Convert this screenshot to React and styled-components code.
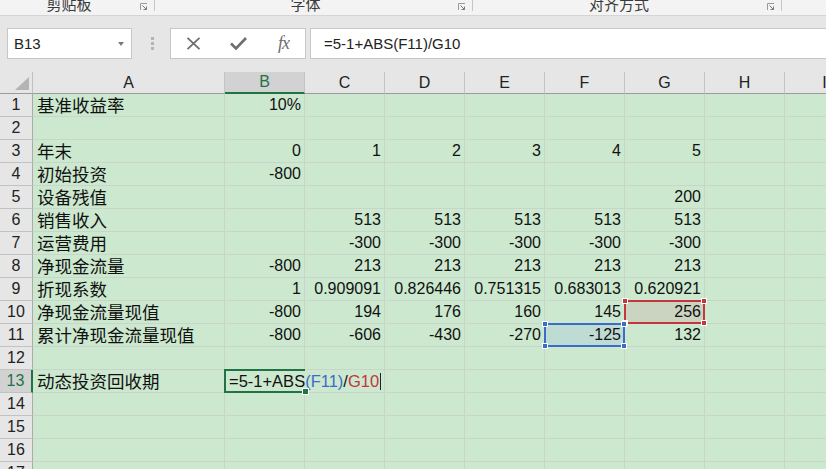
import styled, { createGlobalStyle } from "styled-components";

const GlobalStyle = createGlobalStyle`
  html, body {
    margin: 0;
    padding: 0;
    background: #e6e6e6;
    overflow: hidden;
  }
  body {
    font-family: "Liberation Sans", "Noto Sans CJK SC", sans-serif;
  }
`;

const GREEN = "#cce8cf";
const GRID = "#c9d5ca";

const COLS = ["A", "B", "C", "D", "E", "F", "G", "H", "I"];

const rows = [
  ["基准收益率", "10%"],
  [],
  ["年末", "0", "1", "2", "3", "4", "5"],
  ["初始投资", "-800"],
  ["设备残值", "", "", "", "", "", "200"],
  ["销售收入", "", "513", "513", "513", "513", "513"],
  ["运营费用", "", "-300", "-300", "-300", "-300", "-300"],
  ["净现金流量", "-800", "213", "213", "213", "213", "213"],
  ["折现系数", "1", "0.909091", "0.826446", "0.751315", "0.683013", "0.620921"],
  ["净现金流量现值", "-800", "194", "176", "160", "145", "256"],
  ["累计净现金流量现值", "-800", "-606", "-430", "-270", "-125", "132"],
  [],
  ["动态投资回收期"],
  [],
  [],
  [],
  [],
];

const marks = {
  "10-G": { color: "#c4363c", fill: "#cbd3c1" },
  "11-F": { color: "#3a6cc8", fill: "#bfdcd4" },
};

const Ribbon = styled.div`
  height: 15px;
  display: flex;
  background: #f3f3f3;
  border-bottom: 1px solid #d5d5d5;
  overflow: hidden;
`;

const Group = styled.div`
  flex: ${(p) => (p.$w ? `0 0 ${p.$w}px` : "1")};
  display: flex;
  align-items: flex-start;
`;

const GroupLabel = styled.div`
  flex: 1;
  margin-top: -4px;
  text-align: center;
  font-family: "Noto Sans CJK SC", sans-serif;
  font-size: 15px;
  line-height: 15px;
  color: #3a3a3a;
`;

const Launcher = styled.svg`
  flex: none;
  width: 8px;
  height: 8px;
  margin: 3px 6px 0 2px;
`;

const GroupSep = styled.div`
  flex: none;
  width: 1px;
  height: 11px;
  background: #c6c6c6;
`;

const FormulaBar = styled.div`
  height: 56px;
  box-sizing: border-box;
  padding: 12px 0 0 7px;
  display: flex;
  align-items: flex-start;
`;

const NameBox = styled.div`
  width: 125px;
  height: 31px;
  box-sizing: border-box;
  background: #fff;
  border: 1px solid #c6c6c6;
  display: flex;
  align-items: center;
  justify-content: space-between;
  padding: 0 7px 0 6px;
  font-size: 15px;
  color: #222;
`;

const DropArrow = styled.span`
  width: 0;
  height: 0;
  border-left: 3.5px solid transparent;
  border-right: 3.5px solid transparent;
  border-top: 4px solid #7a7a7a;
`;

const Dots = styled.div`
  width: 3px;
  margin: 9px 16px 0 19px;
  display: flex;
  flex-direction: column;
  gap: 2px;
  span {
    width: 3px;
    height: 3px;
    background: #b4b4b4;
  }
`;

const FxBox = styled.div`
  width: 136px;
  height: 31px;
  box-sizing: border-box;
  background: #fff;
  border: 1px solid #c6c6c6;
  display: grid;
  grid-template-columns: repeat(3, 45px);
  align-items: center;
  justify-items: center;
`;

const FxText = styled.span`
  font-family: "Liberation Serif", serif;
  font-style: italic;
  font-size: 18px;
  color: #6e6e6e;
  letter-spacing: -1px;
`;

const FormulaInput = styled.div`
  flex: 1;
  height: 31px;
  margin-left: 4px;
  margin-right: -2px;
  box-sizing: border-box;
  background: #fff;
  border: 1px solid #c6c6c6;
  display: flex;
  align-items: center;
  padding-left: 13px;
  font-size: 15px;
  color: #222;
`;

const Sheet = styled.div`
  display: grid;
  grid-template-columns: 33px 192px repeat(8, 80px);
  grid-template-rows: 22px;
  grid-auto-rows: 23px;
  width: 826px;
  overflow: hidden;
`;

const Corner = styled.div`
  background: #e6e6e6;
  border-right: 1px solid #c0c0c0;
  border-bottom: 1px solid #9b9b9b;
  position: relative;
  &::after {
    content: "";
    position: absolute;
    right: 3px;
    bottom: 3px;
    width: 0;
    height: 0;
    border-left: 14px solid transparent;
    border-bottom: 13px solid #b4b4b4;
  }
`;

const ColHead = styled.div`
  background: ${(p) => (p.$sel ? "#d2d2d2" : "#e6e6e6")};
  color: ${(p) => (p.$sel ? "#217346" : "#222")};
  border-right: 1px solid #c3c3c3;
  border-bottom: ${(p) => (p.$sel ? "2px solid #217346" : "1px solid #9b9b9b")};
  box-sizing: border-box;
  display: flex;
  align-items: center;
  justify-content: center;
  font-size: 16px;
`;

const RowHead = styled.div`
  background: ${(p) => (p.$sel ? "#d2d2d2" : "#e6e6e6")};
  color: ${(p) => (p.$sel ? "#217346" : "#222")};
  border-right: ${(p) => (p.$sel ? "2px solid #217346" : "1px solid #ababab")};
  border-bottom: 1px solid #c2c2c2;
  box-sizing: border-box;
  display: flex;
  align-items: center;
  justify-content: center;
  font-size: 16px;
`;

const Cell = styled.div`
  position: relative;
  z-index: ${(p) => (p.$top ? 2 : "auto")};
  background: ${(p) => p.$fill || GREEN};
  border-right: 1px solid ${GRID};
  border-bottom: 1px solid ${GRID};
  box-sizing: border-box;
  padding: ${(p) => (p.$label ? "0 0 0 4px" : "0 3px 0 0")};
  text-align: ${(p) => (p.$label ? "left" : "right")};
  font-family: ${(p) =>
    p.$label
      ? `"Noto Sans CJK SC", sans-serif`
      : `"Liberation Sans", "Noto Sans CJK SC", sans-serif`};
  font-size: ${(p) => (p.$label ? "17.5px" : "16px")};
  line-height: 22px;
  color: #111;
  white-space: nowrap;
`;

const RangeMark = styled.div`
  position: absolute;
  top: -1px;
  left: -1px;
  right: -1px;
  bottom: -1px;
  border: 2px solid ${(p) => p.$color};
  pointer-events: none;
  z-index: 3;
`;

const Handle = styled.span`
  position: absolute;
  width: 4px;
  height: 4px;
  background: ${(p) => p.$color};
  border: 1px solid #fff;
  top: ${(p) => (p.$b ? "auto" : "-4px")};
  bottom: ${(p) => (p.$b ? "-4px" : "auto")};
  left: ${(p) => (p.$r ? "auto" : "-4px")};
  right: ${(p) => (p.$r ? "-4px" : "auto")};
`;

const ActiveBorder = styled.div`
  position: absolute;
  top: -1px;
  left: -1px;
  right: -1px;
  bottom: -1px;
  border: 2px solid #217346;
  border-right: none;
  z-index: 4;
  pointer-events: none;
`;

const FillHandle = styled.span`
  position: absolute;
  right: -4px;
  bottom: -4px;
  width: 5px;
  height: 5px;
  background: #217346;
  border: 1px solid #fff;
`;

const Editor = styled.div`
  position: absolute;
  top: 0;
  left: 0;
  height: 22px;
  padding: 0 1px 0 4px;
  background: ${GREEN};
  font-family: "Liberation Sans", sans-serif;
  font-size: 16.5px;
  line-height: 22px;
  color: #111;
  white-space: nowrap;
  z-index: 3;
  display: flex;
  align-items: center;
`;

const Ref = styled.span`
  color: ${(p) => p.$c};
`;

const Caret = styled.span`
  width: 1px;
  height: 17px;
  margin-left: 1px;
  background: #222;
`;

function RibbonBar() {
  const groups = [
    { label: "剪贴板", w: 155 },
    { label: "字体", w: 318 },
    { label: "对齐方式", w: 309 },
  ];
  return (
    <Ribbon>
      {groups.map((g) => (
        <Group key={g.label} $w={g.w}>
          <GroupLabel>{g.label}</GroupLabel>
          <Launcher viewBox="0 0 8 8">
            <path d="M0.5 7V0.5H7" fill="none" stroke="#9a9a9a" />
            <path d="M2.5 2.5L6.5 6.5M3.5 6.5H6.5V3.5" fill="none" stroke="#7a7a7a" />
          </Launcher>
          <GroupSep />
        </Group>
      ))}
      <Group />
    </Ribbon>
  );
}

function Formula() {
  return (
    <FormulaBar>
      <NameBox>
        B13
        <DropArrow />
      </NameBox>
      <Dots>
        <span />
        <span />
        <span />
      </Dots>
      <FxBox>
        <svg width="15" height="13" viewBox="0 0 15 13">
          <path d="M1.5 0.8L13.5 12.2M13.5 0.8L1.5 12.2" stroke="#6e6e6e" strokeWidth="1.8" />
        </svg>
        <svg width="17" height="13" viewBox="0 0 17 13">
          <path d="M1 6.5L6 11.5L16 1" fill="none" stroke="#6e6e6e" strokeWidth="2.6" />
        </svg>
        <FxText>fx</FxText>
      </FxBox>
      <FormulaInput>=5-1+ABS(F11)/G10</FormulaInput>
    </FormulaBar>
  );
}

function Grid() {
  return (
    <Sheet>
      <Corner />
      {COLS.map((c) => (
        <ColHead key={c} $sel={c === "B"}>
          {c}
        </ColHead>
      ))}
      {rows.map((row, ri) => {
        const r = ri + 1;
        return [
          <RowHead key={`h${r}`} $sel={r === 13}>
            {r}
          </RowHead>,
          ...COLS.map((c, ci) => {
            const mark = marks[`${r}-${c}`];
            const active = r === 13 && c === "B";
            return (
              <Cell
                key={`${r}${c}`}
                $label={ci === 0}
                $fill={mark && mark.fill}
                $top={active || !!mark}
              >
                {row[ci] || ""}
                {mark && (
                  <RangeMark $color={mark.color}>
                    <Handle $color={mark.color} />
                    <Handle $color={mark.color} $r />
                    <Handle $color={mark.color} $b />
                    <Handle $color={mark.color} $b $r />
                  </RangeMark>
                )}
                {active && (
                  <>
                    <Editor>
                      =5-1+ABS<Ref $c="#3a6cc8">(F11)</Ref>/<Ref $c="#c4363c">G10</Ref>
                      <Caret />
                    </Editor>
                    <ActiveBorder>
                      <FillHandle />
                    </ActiveBorder>
                  </>
                )}
              </Cell>
            );
          }),
        ];
      })}
    </Sheet>
  );
}

export default function App() {
  return (
    <>
      <GlobalStyle />
      <RibbonBar />
      <Formula />
      <Grid />
    </>
  );
}
